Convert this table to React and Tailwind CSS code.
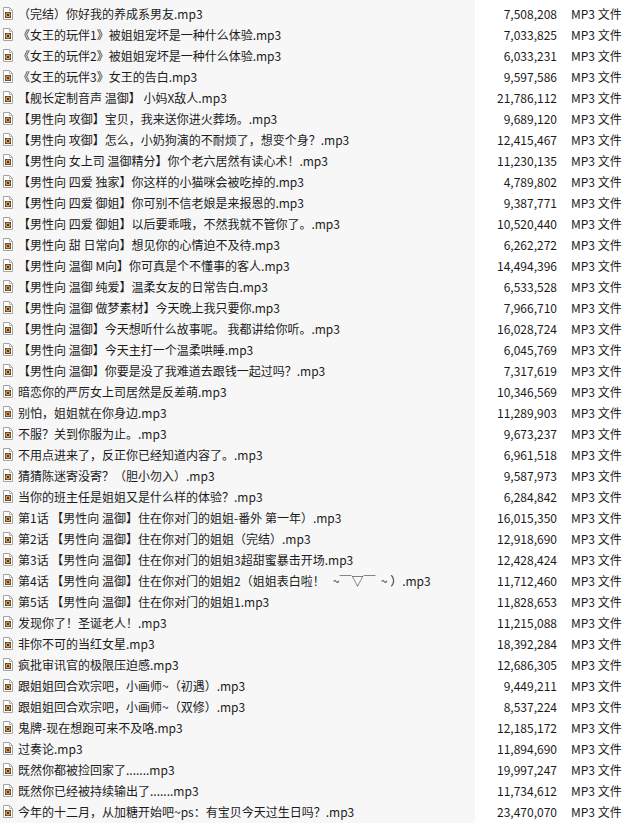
import React from 'react';

const FILES = [
  ['（完结）你好我的养成系男友.mp3', '7,508,208'],
  ['《女王的玩伴1》被姐姐宠坏是一种什么体验.mp3', '7,033,825'],
  ['《女王的玩伴2》被姐姐宠坏是一种什么体验.mp3', '6,033,231'],
  ['《女王的玩伴3》女王的告白.mp3', '9,597,586'],
  ['【舰长定制音声 温御】 小妈X敌人.mp3', '21,786,112'],
  ['【男性向 攻御】宝贝，我来送你进火葬场。.mp3', '9,689,120'],
  ['【男性向 攻御】怎么，小奶狗演的不耐烦了，想变个身？.mp3', '12,415,467'],
  ['【男性向 女上司 温御精分】你个老六居然有读心术！.mp3', '11,230,135'],
  ['【男性向 四爱 独家】你这样的小猫咪会被吃掉的.mp3', '4,789,802'],
  ['【男性向 四爱 御姐】你可别不信老娘是来报恩的.mp3', '9,387,771'],
  ['【男性向 四爱 御姐】以后要乖哦，不然我就不管你了。.mp3', '10,520,440'],
  ['【男性向 甜 日常向】想见你的心情迫不及待.mp3', '6,262,272'],
  ['【男性向 温御 M向】你可真是个不懂事的客人.mp3', '14,494,396'],
  ['【男性向 温御 纯爱】温柔女友的日常告白.mp3', '6,533,528'],
  ['【男性向 温御 做梦素材】今天晚上我只要你.mp3', '7,966,710'],
  ['【男性向 温御】今天想听什么故事呢。 我都讲给你听。.mp3', '16,028,724'],
  ['【男性向 温御】今天主打一个温柔哄睡.mp3', '6,045,769'],
  ['【男性向 温御】你要是没了我难道去跟钱一起过吗？.mp3', '7,317,619'],
  ['暗恋你的严厉女上司居然是反差萌.mp3', '10,346,569'],
  ['别怕，姐姐就在你身边.mp3', '11,289,903'],
  ['不服？关到你服为止。.mp3', '9,673,237'],
  ['不用点进来了，反正你已经知道内容了。.mp3', '6,961,518'],
  ['猜猜陈迷寄没寄？（胆小勿入）.mp3', '9,587,973'],
  ['当你的班主任是姐姐又是什么样的体验？.mp3', '6,284,842'],
  ['第1话 【男性向 温御】住在你对门的姐姐-番外 第一年）.mp3', '16,015,350'],
  ['第2话 【男性向 温御】住在你对门的姐姐（完结）.mp3', '12,918,690'],
  ['第3话 【男性向 温御】住在你对门的姐姐3超甜蜜暴击开场.mp3', '12,428,424'],
  ['第4话 【男性向 温御】住在你对门的姐姐2（姐姐表白啦！   ~￣▽￣  ~ ）.mp3', '11,712,460'],
  ['第5话 【男性向 温御】住在你对门的姐姐1.mp3', '11,828,653'],
  ['发现你了！圣诞老人！.mp3', '11,215,088'],
  ['非你不可的当红女星.mp3', '18,392,284'],
  ['疯批审讯官的极限压迫感.mp3', '12,686,305'],
  ['跟姐姐回合欢宗吧，小画师~（初遇）.mp3', '9,449,211'],
  ['跟姐姐回合欢宗吧，小画师~（双修）.mp3', '8,537,224'],
  ['鬼牌-现在想跑可来不及咯.mp3', '12,185,172'],
  ['过奏论.mp3', '11,894,690'],
  ['既然你都被捡回家了.......mp3', '19,997,247'],
  ['既然你已经被持续输出了.......mp3', '11,734,612'],
  ['今年的十二月，从加糖开始吧~ps：有宝贝今天过生日吗？.mp3', '23,470,070'],
];

// small mp3 file glyph, as in the explorer list
function Mp3Icon() {
  return (
    <svg width="10" height="13" viewBox="0 0 10 13" className="shrink-0">
      <path d="M0.5 0.5H6.5L9.5 3.5V12.5H0.5Z" fill="#fff" stroke="#a3a3a3" />
      <path d="M6.5 0.5V3.5H9.5" fill="none" stroke="#b5b5b5" />
      <rect x="2" y="5" width="6" height="6" rx="0.5" fill="#3b3b3b" />
      <circle cx="5" cy="8" r="1.9" fill="none" stroke="#f0a23a" strokeWidth="1.2" />
    </svg>
  );
}

export default function App() {
  return (
    <div
      className="min-h-screen pt-[2.5px] text-[12px] text-[#1b1b1b] bg-[linear-gradient(to_right,#f7f7f7_475px,#ffffff_475px)]"
      style={{ fontFamily: '"Noto Sans CJK SC", "Noto Sans", sans-serif' }}
    >
      {FILES.map(([name, size]) => (
        <div key={name} className="flex h-[21px] items-center leading-[21px]">
          <div className="w-[475px] shrink-0 flex items-center gap-[5px] pl-[3px]">
            <Mp3Icon />
            <span className="whitespace-pre">{name}</span>
          </div>
          <div className="w-[82px] shrink-0 text-right">{size}</div>
          <div className="pl-[14px] whitespace-nowrap">MP3 文件</div>
        </div>
      ))}
    </div>
  );
}
